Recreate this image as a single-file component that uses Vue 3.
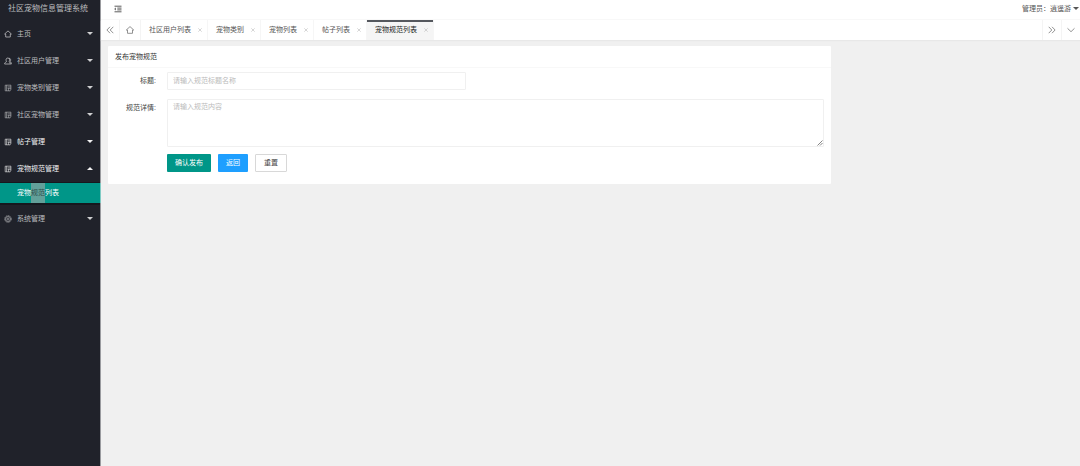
<script setup>
import { ref } from 'vue'

const menu = [
  { name: '主页', icon: 'home' },
  { name: '社区用户管理', icon: 'user' },
  { name: '宠物类别管理', icon: 'list' },
  { name: '社区宠物管理', icon: 'list' },
  { name: '帖子管理', icon: 'list', bright: true },
  { name: '宠物规范管理', icon: 'list', bright: true, open: true },
  { name: '系统管理', icon: 'gear' },
]
const tabs = ['社区用户列表', '宠物类别', '宠物列表', '帖子列表', '宠物规范列表']
const active = ref(4)
const title = ref('')
const detail = ref('')
</script>

<template>
  <div class="layout">
    <aside class="side">
      <h1 class="logo">社区宠物信息管理系统</h1>
      <nav>
        <template v-for="item in menu" :key="item.name">
          <a href="#" class="item" :class="{ bright: item.bright }">
            <svg class="icon" viewBox="0 0 8 8">
              <path v-if="item.icon === 'home'" d="M.6 4 4 .9 7.4 4H6.3V7H1.7V4Z" />
              <path v-else-if="item.icon === 'user'" d="M.6 7C.6 5.6 1.6 5.2 2.6 4.6 1.5 3 2 1 3.8 1S6.1 3 5 4.6C6 5.2 6.2 6 6.2 7ZM5 1.2C7 1.4 7 3.6 6 4.5 7 5 7.4 6 7.4 7H6.2" />
              <path v-else-if="item.icon === 'list'" class="thin" d="M1.2 1.2V6.8M2.6 1.2V6.8M1.2 1.2H7M3.6 2.9H6.9M3.6 4.3H6.9M1.2 6.8H6.2M6.9 1.2V5.8L5.8 6.8M4.6 4.3V6.8" />
              <g v-else class="thin"><circle cx="4" cy="4" r="3.3" stroke-dasharray="1.6 .5" /><circle cx="4" cy="4" r="2.5" /><circle cx="4" cy="4" r="1" /></g>
            </svg>
            <span>{{ item.name }}</span>
            <i class="caret" :class="{ up: item.open }"></i>
          </a>
          <div v-if="item.open" class="sub">
            <a href="#">宠物<mark>规范</mark>列表</a>
          </div>
        </template>
      </nav>
    </aside>

    <div class="page">
      <header class="top">
        <button class="plain fold" aria-label="收起菜单">
          <svg class="icon" viewBox="0 0 8 8"><path d="M.5 1.2H7.5M3.3 3.1H7.5M3.3 4.9H7.5M.5 6.8H7.5M2 2.9.7 4 2 5.1" /></svg>
        </button>
        <a href="#" class="admin">管理员：逍遥游<i class="caret"></i></a>
      </header>

      <div class="tabs">
        <button class="plain cell first" aria-label="向左">
          <svg class="icon" viewBox="0 0 8 8"><path d="M4 .8.9 4 4 7.2M7.3 .8 4.2 4 7.3 7.2" /></svg>
        </button>
        <a href="#" class="cell home" aria-label="主页">
          <svg class="icon" viewBox="0 0 8 8"><path d="M.3 4 4 .6 7.7 4H6.5V7.3H1.5V4Z" /></svg>
        </a>
        <div v-for="(t, i) in tabs" :key="t" class="tab" :class="{ on: i === active }">
          <a href="#" @click.prevent="active = i">{{ t }}</a>
          <button class="plain close" aria-label="关闭">
            <svg viewBox="0 0 4 4"><path d="M.3.3 3.7 3.7M3.7.3.3 3.7" /></svg>
          </button>
        </div>
        <span class="space"></span>
        <button class="plain cell end" aria-label="向右">
          <svg class="icon" viewBox="0 0 8 8"><path d="M.7 .8 3.8 4 .7 7.2M4 .8 7.1 4 4 7.2" /></svg>
        </button>
        <button class="plain cell end" aria-label="更多">
          <svg class="icon" viewBox="0 0 8 8"><path d="M.5 2.3 4 5.7 7.5 2.3" /></svg>
        </button>
      </div>

      <main class="body">
        <section class="card">
          <h2>发布宠物规范</h2>
          <form @submit.prevent>
            <div class="row">
              <label for="title">标题:</label>
              <input id="title" v-model="title" type="text" placeholder="请输入规范标题名称">
            </div>
            <div class="row">
              <label for="detail">规范详情:</label>
              <div class="area">
                <textarea id="detail" v-model="detail" placeholder="请输入规范内容"></textarea>
                <svg class="grip" viewBox="0 0 6 6"><path d="M.5 5.5 5.5.5M3 5.5 5.5 3" /></svg>
              </div>
            </div>
            <div class="actions">
              <button class="btn" type="submit">确认发布</button>
              <button class="btn blue" type="button">返回</button>
              <button class="btn white" type="reset">重置</button>
            </div>
          </form>
        </section>
      </main>
    </div>
  </div>
</template>

<style>
body {
  background: #f0f0f0;
}
</style>

<style scoped>
.layout {
  display: flex;
  min-height: 100vh;
  color: #555;
  font: 7px/18px "Liberation Sans", "Noto Sans CJK SC", sans-serif;
}
.layout * {
  box-sizing: border-box;
}
a {
  color: inherit;
  text-decoration: none;
}
h1,
h2 {
  margin: 0;
  font-weight: 400;
}
.icon {
  width: 8px;
  height: 8px;
  flex: none;
  fill: none;
  stroke: currentColor;
  stroke-width: 0.8;
}
.thin {
  stroke-width: 0.6;
}
.plain {
  border: 0;
  padding: 0;
  background: none;
  color: inherit;
}
.caret {
  border: 3px solid transparent;
  border-top-color: currentColor;
  border-bottom: 0;
}
.caret.up {
  border-top: 0;
  border-bottom: 3px solid currentColor;
}

.side {
  flex: 0 0 101px;
  background: #20222a;
  border-right: 1px solid #9a9b9f;
  color: #bcbdbf;
}
.logo {
  height: 20px;
  font-size: 8px;
  line-height: 17px;
  text-align: center;
  padding-right: 4px;
  white-space: nowrap;
}
.item {
  display: flex;
  align-items: center;
  height: 27px;
  padding: 0 7px 0 4px;
}
.item span {
  flex: 1;
  margin-left: 5px;
}
.item .caret {
  color: #d0d0d2;
}
.item.bright,
.item.bright .caret {
  color: #f2f2f2;
}
.sub {
  padding: 1px 0 2px;
  background: #16181e;
}
.sub a {
  display: block;
  margin-right: -1px;
  border-right: 1px solid #80cbc4;
  padding-left: 17px;
  background: #009688;
  color: #fff;
  line-height: 20px;
}
.sub mark {
  display: inline-block;
  background: #62a09a;
  color: #304e4c;
}

.page {
  flex: 1;
  min-width: 0;
}
.top {
  display: flex;
  align-items: center;
  justify-content: space-between;
  height: 20px;
  padding: 0 1px 2px 13px;
  background: #fff;
  border-bottom: 1px solid #f8f8f8;
}
.fold {
  display: flex;
  color: #333;
}
.admin {
  display: flex;
  align-items: center;
  gap: 2px;
}
.tabs {
  display: flex;
  height: 20px;
  background: #fff;
  box-shadow: 0 1px 1px #e8e8e8;
}
.cell {
  display: flex;
  align-items: center;
  justify-content: center;
  width: 21px;
  border-right: 1px solid #f4f4f4;
  color: #777;
}
.cell.first {
  width: 19px;
}
.cell.end {
  width: 19px;
  border-right: 0;
  border-left: 1px solid #f4f4f4;
}
.tab {
  display: flex;
  align-items: center;
  gap: 7px;
  padding: 0 5px 0 8px;
  border-right: 1px solid #f6f6f6;
  white-space: nowrap;
}
.tab.on {
  background: #f5f5f5;
  box-shadow: inset 0 2px #55585e;
  color: #222;
}
.close svg {
  display: block;
  width: 4px;
  height: 4px;
  fill: none;
  stroke: #bbb;
  stroke-width: 0.6;
}
.space {
  flex: 1;
}

.body {
  padding: 6px 8px 8px 7px;
}
.card {
  width: 75%;
  background: #fff;
  border-radius: 1px;
}
h2 {
  padding: 2px 7px 1px;
  border-bottom: 1px solid #f8f8f8;
  font-size: 7px;
  color: #333;
}
form {
  padding: 4px 7px 12px;
}
.row {
  display: flex;
  margin-bottom: 9px;
}
label {
  flex: 0 0 52px;
  padding-right: 11px;
  text-align: right;
  color: #444;
}
input,
textarea {
  display: block;
  border: 1px solid #f0f0f0;
  border-radius: 1px;
  background: #fff;
  padding: 0 5px;
  font: inherit;
  color: #333;
  outline: 0;
}
input {
  width: 299px;
  height: 18px;
}
textarea {
  width: 100%;
  height: 48px;
  padding-top: 2px;
  line-height: 10px;
  resize: none;
}
::placeholder {
  color: #bbb;
}
.area {
  position: relative;
  flex: 1;
}
.row:nth-child(2) {
  margin-bottom: 7px;
}
.grip {
  position: absolute;
  right: 1px;
  bottom: 1px;
  width: 6px;
  height: 6px;
  fill: none;
  stroke: #777;
  stroke-width: 0.9;
}
.actions {
  display: flex;
  gap: 7px;
  margin-left: 52px;
}
.btn {
  height: 18px;
  padding: 0 8px;
  border: 0;
  border-radius: 1px;
  background: #009688;
  color: #fff;
  font: inherit;
}
.btn.blue {
  background: #1e9fff;
}
.btn.white {
  border: 1px solid #d8d8d8;
  background: #fff;
  color: #444;
  line-height: 16px;
}
</style>
